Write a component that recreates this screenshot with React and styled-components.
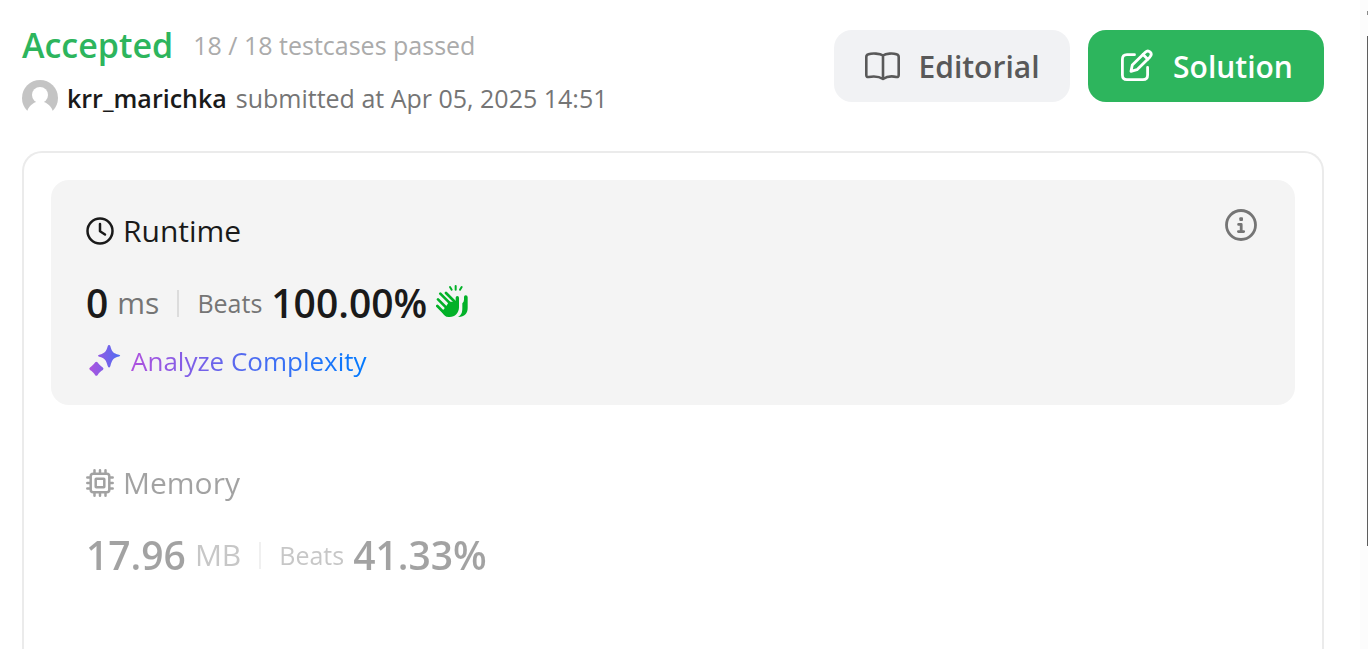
import React from "react";
import styled, { createGlobalStyle } from "styled-components";

const GlobalStyle = createGlobalStyle`
  * { box-sizing: border-box; }
  body {
    margin: 0;
    background: #fff;
    color: #1a1a1a;
    font-family: "Segoe UI", "Open Sans", "Noto Sans", sans-serif;
    font-size: 26px;
  }
  h1, h2, p { margin: 0; }
`;

const Page = styled.div`
  display: flex;
  height: 100vh;
  overflow: hidden;
`;

const Main = styled.main`
  flex: 1;
  min-width: 0;
  display: flex;
  flex-direction: column;
  padding: 30px 36px 0 22px;
`;

const ScrollRail = styled.div`
  width: 8px;
  display: flex;
  flex-direction: column;
  align-items: flex-end;
  padding-top: 11px;
  gap: 21px;
  background: #fcfcfc;
`;

const RailArrow = styled.span`
  width: 1px;
  height: 4px;
  background: #8a8a8a;
`;

const RailThumb = styled.span`
  width: 1px;
  height: 80%;
  background: #5c5c5c;
`;

const Header = styled.header`
  display: flex;
  justify-content: space-between;
  align-items: flex-start;
  margin-bottom: 31px;
`;

const Summary = styled.div`
  display: flex;
  flex-direction: column;
  height: 90px;
  white-space: nowrap;
`;

const StatusLine = styled.div`
  display: flex;
  align-items: flex-start;
  gap: 20px;
  height: 48px;
  line-height: 30px;
`;

const Status = styled.h1`
  font-size: 34px;
  font-weight: 600;
  line-height: 30px;
  color: #2db55d;
`;

const Testcases = styled.span`
  font-size: 25px;
  color: #ababab;
`;

const SubmitLine = styled.div`
  display: flex;
  align-items: center;
  gap: 9px;
  height: 40px;
  font-size: 25px;
  line-height: 40px;
  color: #757575;
`;

const Author = styled.a`
  font-weight: 600;
  color: #1a1a1a;
  text-decoration: none;
`;

const Actions = styled.div`
  display: flex;
  gap: 18px;
`;

const ActionButton = styled.button`
  display: flex;
  align-items: center;
  justify-content: center;
  gap: 18px;
  width: 236px;
  height: 72px;
  border: 0;
  border-radius: 18px;
  font: inherit;
  font-size: 30px;
  font-weight: 600;
  cursor: pointer;
  color: ${(p) => (p.$primary ? "#fff" : "#595959")};
  background: ${(p) => (p.$primary ? "#2db55d" : "#f1f2f4")};
`;

const Card = styled.section`
  flex: 1;
  display: flex;
  flex-direction: column;
  gap: 27px;
  padding: 27px;
  border: 2px solid #ebebeb;
  border-bottom: 0;
  border-radius: 20px 20px 0 0;
`;

const Panel = styled.article`
  height: 225px;
  flex-shrink: 0;
  padding: 27px 36px 27px 35px;
  border-radius: 18px;
  background: ${(p) => (p.$active ? "#f4f4f4" : "transparent")};
`;

const PanelBody = styled.div`
  opacity: ${(p) => (p.$muted ? 0.4 : 1)};
`;

const PanelTop = styled.div`
  display: flex;
  justify-content: space-between;
  align-items: flex-start;
  height: 48px;
`;

const PanelTitle = styled.h2`
  display: flex;
  align-items: center;
  gap: 9px;
  font-size: 30px;
  font-weight: 400;
  line-height: 47px;
`;

const InfoButton = styled.button`
  display: flex;
  padding: 2px;
  border: 0;
  background: none;
  color: #757575;
  cursor: pointer;
`;

const Metrics = styled.div`
  display: flex;
  align-items: center;
  gap: 9px;
  height: 54px;
  margin: 21px 0 13px;
  line-height: 54px;
  white-space: nowrap;
`;

const Figure = styled.span`
  font-size: 39px;
  font-weight: 600;
`;

const Unit = styled.span`
  font-size: 30px;
  color: #757575;
`;

const Divider = styled.span`
  width: 2px;
  height: 27px;
  margin: 0 9px;
  background: #dcdcdc;
`;

const Beats = styled.span`
  font-size: 25px;
  color: #757575;
`;

const AnalyzeLink = styled.a`
  display: inline-flex;
  align-items: center;
  gap: 9px;
  height: 36px;
  font-size: 26px;
  line-height: 36px;
  text-decoration: none;
`;

const GradientText = styled.span`
  color: transparent;
  background: linear-gradient(90deg, #af52de 0%, #4f6bf0 50%, #007aff 100%);
  background-clip: text;
  -webkit-background-clip: text;
`;

const AvatarIcon = () => (
  <svg width="36" height="36" viewBox="0 0 36 36" aria-hidden="true">
    <circle cx="18" cy="18" r="18" fill="#c4c4c4" />
    <circle cx="18" cy="15" r="8" fill="#fff" />
    <path d="M4 36c1-8 5-12 10-14h8c5 2 9 6 10 14z" fill="#fff" />
  </svg>
);

const BookIcon = () => (
  <svg width="36" height="36" viewBox="0 0 36 36" fill="none" stroke="currentColor" strokeWidth="2.600" strokeLinejoin="round" strokeLinecap="round" aria-hidden="true">
    <path d="M19 7.500C16 5.300 8 5 4.500 6.300Q2.300 7 2.300 9V27q0 2.300 2.300 2C9 28.200 15 28.300 19 31c4-2.700 10-2.800 13.400-2q2.300.3 2.300-2V9q0-2-2.200-2.700C29 5 22 5.300 19 7.500zV31" />
  </svg>
);

const EditIcon = () => (
  <svg width="36" height="36" viewBox="0 0 36 36" fill="none" stroke="currentColor" strokeWidth="2.800" strokeLinejoin="round" strokeLinecap="round" aria-hidden="true">
    <path d="M15.500 6.700H8Q3.400 6.700 3.400 11.300V27Q3.400 31.600 8 31.600H24Q28.600 31.600 28.600 27V19.500" />
    <path d="M12 23.300l1.300-6.300L26.300 4.200c3.400-3.200 7.900 1.300 4.700 4.700L18 21.700z" />
    <path d="M24 6.500l4.800 4.800" />
  </svg>
);

const ClockIcon = () => (
  <svg width="28" height="28" viewBox="0 0 28 28" fill="none" stroke="currentColor" strokeWidth="2.500" strokeLinecap="round" strokeLinejoin="round" aria-hidden="true">
    <circle cx="14" cy="14" r="12.500" />
    <path d="M14 7v7.300l5 3.200" />
  </svg>
);

const ChipIcon = () => (
  <svg width="28" height="28" viewBox="0 0 28 28" fill="none" stroke="currentColor" strokeWidth="2.500" strokeLinecap="round" aria-hidden="true">
    <rect x="4.700" y="4.700" width="18.600" height="18.600" rx="2.500" />
    <rect x="9.700" y="9.700" width="8.600" height="8.600" rx=".5" />
    <path d="M8.500 1.300V4M14 1.300V4M19.500 1.300V4M8.500 24v2.700M14 24v2.700M19.500 24v2.700M1.300 8.500H4M1.300 14H4M1.300 19.500H4M24 8.500h2.700M24 14h2.700M24 19.500h2.700" />
  </svg>
);

const InfoIcon = () => (
  <svg width="32" height="32" viewBox="0 0 32 32" fill="none" stroke="currentColor" strokeWidth="2.800" strokeLinecap="round" strokeLinejoin="round" aria-hidden="true">
    <circle cx="16" cy="16" r="14.500" />
    <path d="M13.600 15.400H16.200V22.500M13.400 22.600H18.700" />
    <rect x="14.300" y="8.300" width="3.700" height="3.700" rx="1" fill="currentColor" stroke="none" />
  </svg>
);

const ClapIcon = () => (
  <svg width="36" height="36" viewBox="7 2 108 108" aria-hidden="true">
    <g fill="none" stroke="#02b128" strokeLinecap="round">
      <path strokeWidth="8" d="M37 26L64 53M20 28L56 64M13 45L48 80M11 65L38 92" />
      <path strokeWidth="10" d="M71 40V66" />
      <path strokeWidth="6" d="M49 8l5 8M66 5v11M84 8l-5 8" />
    </g>
    <path fill="#02b128" d="M46 52L64 52L76 44V68C76 86 64 98 48 98C36 98 30 91 24 82L36 68z" />
    <path fill="#02b128" d="M91 38Q91 33 96 33Q102 33 102 39V71C102 88 91 99 73 98C84 91 86 84 86 70V57Q91 52 91 46z" />
  </svg>
);

const SparkleIcon = () => (
  <svg width="36" height="36" viewBox="0 0 36 36" aria-hidden="true">
    <defs>
      <linearGradient id="sparkle" x1="0" y1="0" x2="1" y2="0">
        <stop offset="0" stopColor="#af52de" />
        <stop offset="1" stopColor="#4d6ef2" />
      </linearGradient>
    </defs>
    <path fill="url(#sparkle)" d="M23 2Q24.100 2 24.400 3.200C26 9 27 10.200 33 11.700Q35.400 12.400 33 13.600C27 15.200 26 17 24.400 23Q23.100 26 21.700 23C20 17 19 15.200 13.200 13.700Q10.800 12.600 13.200 11.700C19 10 20 9 21.700 3.200Q22 2 23 2zM9.200 19.300Q10.300 18.200 11.500 19.300C13 21.500 14.500 23 16.800 24.500Q18.300 25.800 16.800 27.100C14.500 28.500 13 30 11.500 32.200Q10.300 33.400 9.200 32.200C7.700 30 6.200 28.500 4 27.100Q2.400 25.800 4 24.500C6.200 23 7.700 21.500 9.200 19.300z" />
  </svg>
);

export default function App() {
  return (
    <>
      <GlobalStyle />
      <Page>
        <Main>
          <Header>
            <Summary>
              <StatusLine>
                <Status>Accepted</Status>
                <Testcases>18 / 18 testcases passed</Testcases>
              </StatusLine>
              <SubmitLine>
                <AvatarIcon />
                <Author href="#author">krr_marichka</Author>
                <span>submitted at Apr 05, 2025 14:51</span>
              </SubmitLine>
            </Summary>
            <Actions>
              <ActionButton type="button">
                <BookIcon />
                Editorial
              </ActionButton>
              <ActionButton type="button" $primary>
                <EditIcon />
                Solution
              </ActionButton>
            </Actions>
          </Header>
          <Card>
            <Panel $active>
              <PanelTop>
                <PanelTitle>
                  <ClockIcon />
                  Runtime
                </PanelTitle>
                <InfoButton type="button" aria-label="Runtime details">
                  <InfoIcon />
                </InfoButton>
              </PanelTop>
              <Metrics>
                <Figure>0</Figure>
                <Unit>ms</Unit>
                <Divider />
                <Beats>Beats</Beats>
                <Figure>100.00%</Figure>
                <ClapIcon />
              </Metrics>
              <AnalyzeLink href="#complexity">
                <SparkleIcon />
                <GradientText>Analyze Complexity</GradientText>
              </AnalyzeLink>
            </Panel>
            <Panel>
              <PanelBody $muted>
                <PanelTop>
                  <PanelTitle>
                    <ChipIcon />
                    Memory
                  </PanelTitle>
                </PanelTop>
                <Metrics>
                  <Figure>17.96</Figure>
                  <Unit>MB</Unit>
                  <Divider />
                  <Beats>Beats</Beats>
                  <Figure>41.33%</Figure>
                </Metrics>
              </PanelBody>
            </Panel>
          </Card>
        </Main>
        <ScrollRail>
          <RailArrow />
          <RailThumb />
        </ScrollRail>
      </Page>
    </>
  );
}
